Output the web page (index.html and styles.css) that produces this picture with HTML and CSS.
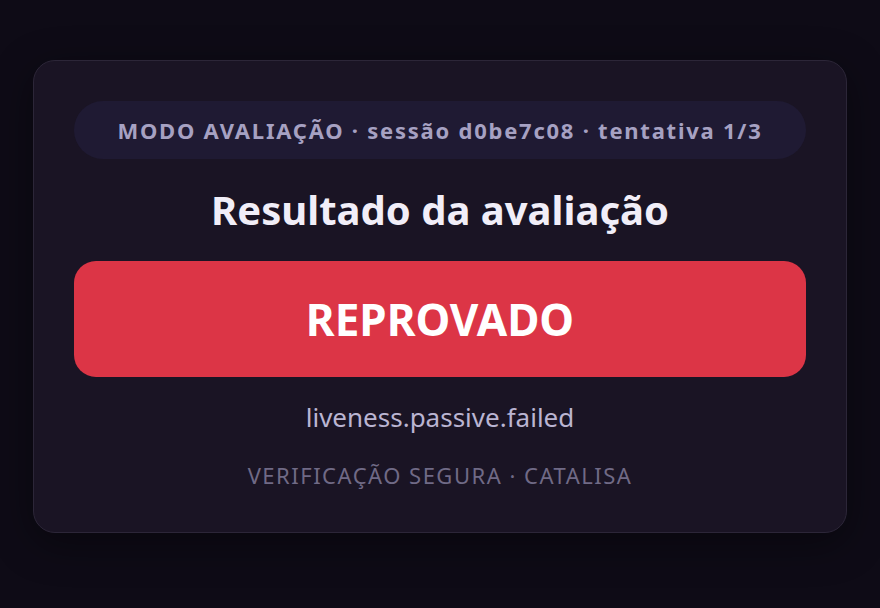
FILE: index.html
```html
<!DOCTYPE html>
<html lang="pt">
<head>
<meta charset="utf-8">
<link rel="stylesheet" href="styles.css">
</head>
<body>
<main class="card">
  <div class="pill">MODO AVALIAÇÃO · sessão d0be7c08 · tentativa 1/3</div>
  <h1 class="title">Resultado da avaliação</h1>
  <div class="result">REPROVADO</div>
  <p class="reason">liveness.passive.failed</p>
  <p class="footer">VERIFICAÇÃO SEGURA · CATALISA</p>
</main>
</body>
</html>
```
FILE: styles.css
```css
html, body {
  margin: 0;
  height: 100%;
}
body {
  background: #0e0b16;
  font-family: "Noto Sans", "Open Sans", sans-serif;
  padding: 60px 33px 0;
  box-sizing: border-box;
}
.card {
  background: #1a1424;
  border: 1px solid #2c2638;
  border-radius: 22px;
  padding: 40px 40px 42px;
  display: flex;
  flex-direction: column;
  align-items: stretch;
  box-shadow: 0 10px 40px rgba(0,0,0,0.4);
}
.pill {
  background: #1f1a33;
  border-radius: 29px;
  height: 58px;
  display: flex;
  align-items: center;
  justify-content: center;
  color: #a6a1c2;
  font-weight: 700;
  font-size: 22px;
  letter-spacing: 0.08em;
}
.title {
  margin: 27px 0 0;
  text-align: center;
  color: #f1eef8;
  font-size: 40px;
  font-weight: 700;
  line-height: 48px;
}
.result {
  margin-top: 27px;
  background: #dc3546;
  border-radius: 22px;
  height: 116px;
  display: flex;
  align-items: center;
  justify-content: center;
  color: #ffffff;
  font-size: 44px;
  font-weight: 700;
}
.reason {
  margin: 23px 0 0;
  text-align: center;
  color: #bab5d2;
  font-size: 26px;
  line-height: 34px;
}
.footer {
  margin: 26px 0 0;
  text-align: center;
  color: #706a86;
  font-size: 22px;
  line-height: 30px;
  letter-spacing: 1.5px;
}
```
